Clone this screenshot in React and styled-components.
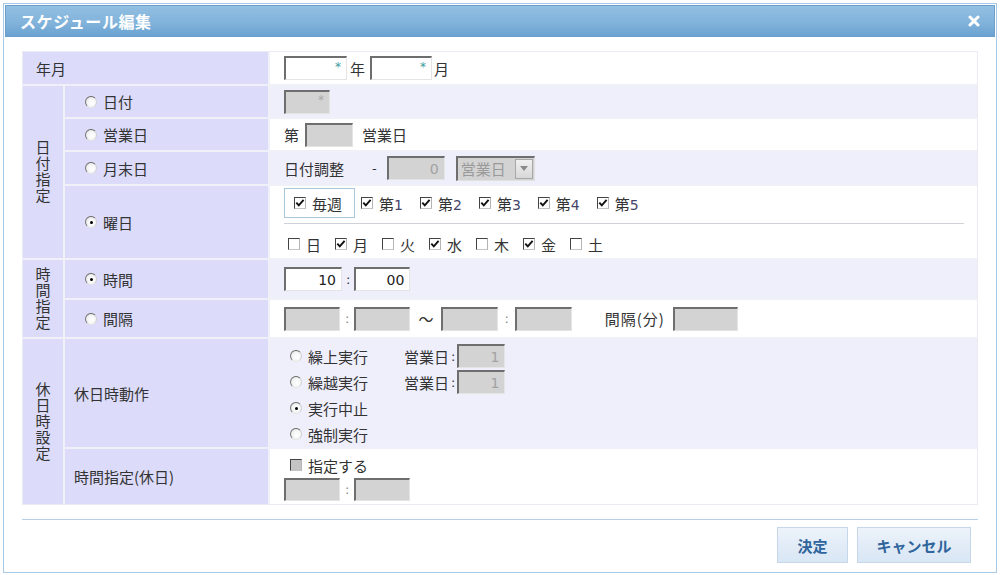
import styled, { createGlobalStyle } from "styled-components";

const GlobalStyle = createGlobalStyle`
  html, body { margin: 0; padding: 0; background: #fff; }
  body {
    font-family: "Noto Sans CJK JP", "Noto Sans", sans-serif;
    font-size: 15px;
    color: #333;
  }
`;

const Page = styled.div`
  padding: 3px;
`;

const Dialog = styled.div`
  width: 994px;
  height: 570px;
  box-sizing: border-box;
  border: 1px solid #a9c9e6;
  padding: 1px;
  display: flex;
  flex-direction: column;
  background: #fff;
`;

const TitleBar = styled.div`
  height: 32px;
  box-sizing: border-box;
  border: 1px solid #6a9fcf;
  background: linear-gradient(180deg, #92bfe2 0%, #82b3db 55%, #6aa2d1 100%);
  display: flex;
  align-items: center;
  justify-content: space-between;
  padding: 0 14px 0 14px;
`;

const Title = styled.span`
  color: #fff;
  font-weight: bold;
  font-size: 16px;
  letter-spacing: 0.6px;
`;

const CloseIcon = () => (
  <svg width="12" height="12" viewBox="0 0 12 12">
    <path d="M2 2 L10 10 M10 2 L2 10" stroke="#fff" strokeWidth="3" strokeLinecap="round" />
  </svg>
);

const Body = styled.div`
  margin: 14px 17px 0 17px;
`;

const Table = styled.div`
  display: grid;
  grid-template-columns: 40px 203px 1fr;
  grid-template-rows: 32px 31px 31px 32px 72px 38px 37px 108px 55px;
  gap: 2px;
  background: #f0f0f8;
  border: 1px solid #ebebf3;
`;

const HeadCell = styled.div`
  grid-column: span ${(p) => p.$cols || 1};
  grid-row: span ${(p) => p.$rows || 1};
  background: #dcdcfa;
  display: flex;
  align-items: center;
  padding-left: ${(p) => p.$pad ?? 0}px;
`;

const GroupCell = styled(HeadCell)`
  justify-content: center;
`;

const VerticalText = styled.span`
  writing-mode: vertical-rl;
  text-orientation: upright;
  letter-spacing: 1px;
  line-height: 1;
`;

const ValueCell = styled.div`
  background: ${(p) => (p.$alt ? "#efeffc" : "#fff")};
  display: flex;
  flex-direction: ${(p) => (p.$column ? "column" : "row")};
  align-items: ${(p) => (p.$column ? "flex-start" : "center")};
  padding: ${(p) => p.$padTop || 0}px 0 0 14px;
  box-sizing: border-box;
`;

const RadioMark = styled.span`
  flex: none;
  width: 12px;
  height: 12px;
  box-sizing: border-box;
  border-radius: 50%;
  border: 1px solid;
  border-color: #666 #d0d0d0 #e4e4e4 #777;
  background: radial-gradient(circle at 60% 60%, #ffffff 0%, #f4f4f4 55%, #d6d6d6 100%);
  position: relative;
  &::after {
    content: "";
    display: ${(p) => (p.$checked ? "block" : "none")};
    position: absolute;
    left: 3.5px;
    top: 3.5px;
    width: 3px;
    height: 3px;
    border-radius: 50%;
    background: #000;
  }
`;

const OptionRow = styled.label`
  display: flex;
  align-items: center;
  gap: 6px;
`;

const OptionText = styled.span`
  width: ${(p) => (p.$w ? `${p.$w}px` : "auto")};
`;

const Radio = ({ checked, label, width }) => (
  <OptionRow>
    <RadioMark $checked={checked} />
    <OptionText $w={width}>{label}</OptionText>
  </OptionRow>
);

const CheckBox = styled.span`
  flex: none;
  width: 12px;
  height: 12px;
  box-sizing: border-box;
  border: 1px solid;
  border-color: #444 #b4b4b4 #c4c4c4 #444;
  background: ${(p) => (p.$disabled ? "#c4c4c4" : "#fff")};
  display: flex;
  align-items: center;
  justify-content: center;
`;

const Check = ({ checked, disabled }) => (
  <CheckBox $disabled={disabled}>
    {checked && (
      <svg width="10" height="10" viewBox="0 0 10 10">
        <path d="M1.3 4.6 L3.8 7.4 L8.6 1.8" fill="none" stroke="#111" strokeWidth="1.9" />
      </svg>
    )}
  </CheckBox>
);

const CheckItem = styled.span`
  display: inline-flex;
  align-items: center;
  gap: 6px;
`;

const Digit = styled.span`
  font-family: "DejaVu Sans", sans-serif;
  font-size: 14px;
  color: #45456a;
`;

const TextBox = styled.span`
  display: inline-flex;
  align-items: center;
  justify-content: flex-end;
  box-sizing: border-box;
  flex: none;
  width: ${(p) => p.$w}px;
  height: ${(p) => p.$h || 24}px;
  border-top: 2px solid #6e6e6e;
  border-left: 2px solid #6e6e6e;
  border-right: 1px solid #e4e4e4;
  border-bottom: 1px solid #e4e4e4;
  background: ${(p) => (p.$disabled ? "#d3d3d3" : "#fff")};
  color: ${(p) => (p.$disabled ? "#a2a2a2" : "#222")};
  padding-right: 5px;
  font-family: "DejaVu Sans", sans-serif;
  font-size: 14px;
  margin-left: ${(p) => p.$ml || 0}px;
`;

const Star = styled.span`
  color: ${(p) => (p.$disabled ? "#aaa" : "#3c9ca0")};
  font-size: 12px;
  position: relative;
  top: -2px;
`;

const Sep = styled.span`
  margin: 0 ${(p) => p.$m ?? 4}px;
  margin-left: ${(p) => p.$ml ?? p.$m ?? 4}px;
  font-family: ${(p) => (p.$latin ? '"DejaVu Sans", sans-serif' : "inherit")};
  font-size: ${(p) => (p.$latin ? "13px" : "15px")};
  color: ${(p) => (p.$muted ? "#888" : "#333")};
  letter-spacing: ${(p) => p.$ls || 0}px;
`;

const Select = styled.span`
  display: inline-flex;
  align-items: stretch;
  box-sizing: border-box;
  width: 79px;
  height: 25px;
  margin-left: 11px;
  border-top: 2px solid #6e6e6e;
  border-left: 2px solid #6e6e6e;
  border-right: 1px solid #e0e0e0;
  border-bottom: 1px solid #e0e0e0;
  background: #d3d3d3;
  color: #9a9a9a;
`;

const SelectText = styled.span`
  flex: 1;
  display: flex;
  align-items: center;
  padding-left: 3px;
`;

const SelectArrow = styled.span`
  width: 18px;
  margin: 1px;
  box-sizing: border-box;
  border: 1px solid #a8a8a8;
  background: linear-gradient(#f0f0f0, #d8d8d8);
  display: flex;
  align-items: center;
  justify-content: center;
`;

const WeekLine = styled.div`
  display: flex;
  align-items: center;
  gap: ${(p) => p.$gap}px;
  padding-left: ${(p) => p.$pad || 0}px;
  height: ${(p) => p.$h}px;
`;

const EveryWeek = styled.span`
  display: inline-flex;
  align-items: center;
  gap: 6px;
  box-sizing: border-box;
  height: 30px;
  width: 71px;
  padding: 0 0 0 9px;
  border: 1px solid #a9c8dc;
  margin-right: -11px;
`;

const Divider = styled.div`
  align-self: stretch;
  height: 1px;
  background: #d0d0d8;
  margin: 5px 13px 9px 0;
`;

const HolidayList = styled.div`
  display: flex;
  flex-direction: column;
  padding-left: 6px;
`;

const HolidayRow = styled.div`
  display: flex;
  align-items: center;
  height: 26px;
`;

const Footer = styled.div`
  margin: 14px 17px 0 17px;
  border-top: 1px solid #b7cfe6;
  display: flex;
  justify-content: flex-end;
  gap: 9px;
  padding: 7px 7px 0 0;
`;

const Button = styled.button`
  width: ${(p) => p.$w}px;
  height: 36px;
  border: 1px solid #c6d7ea;
  background: linear-gradient(180deg, #edf3fa 0%, #e2ecf7 50%, #d9e6f4 100%);
  color: #2f659c;
  font-family: "Noto Sans CJK JP", sans-serif;
  font-weight: bold;
  font-size: 15px;
  padding: 0;
  cursor: pointer;
`;

const weekdays = [
  ["日", false],
  ["月", true],
  ["火", false],
  ["水", true],
  ["木", false],
  ["金", true],
  ["土", false],
];

export default function App() {
  return (
    <>
      <GlobalStyle />
      <Page>
        <Dialog>
          <TitleBar>
            <Title>スケジュール編集</Title>
            <CloseIcon />
          </TitleBar>
          <Body>
            <Table>
              <HeadCell $cols={2} $pad={13}>年月</HeadCell>
              <ValueCell>
                <TextBox $w={63}><Star>*</Star></TextBox>
                <Sep $m={3}>年</Sep>
                <TextBox $w={62} $ml={2}><Star>*</Star></TextBox>
                <Sep $m={2}>月</Sep>
              </ValueCell>

              <GroupCell $rows={4}><VerticalText>日付指定</VerticalText></GroupCell>
              <HeadCell $pad={20}><Radio label="日付" /></HeadCell>
              <ValueCell $alt>
                <TextBox $w={46} $disabled><Star $disabled>*</Star></TextBox>
              </ValueCell>

              <HeadCell $pad={20}><Radio label="営業日" /></HeadCell>
              <ValueCell>
                <span>第</span>
                <TextBox $w={48} $disabled $ml={6} />
                <Sep $ml={9}>営業日</Sep>
              </ValueCell>

              <HeadCell $pad={20}><Radio label="月末日" /></HeadCell>
              <ValueCell $alt>
                <span>日付調整</span>
                <Sep $ml={28} $m={10} $latin>-</Sep>
                <TextBox $w={58} $disabled>0</TextBox>
                <Select>
                  <SelectText>営業日</SelectText>
                  <SelectArrow>
                    <svg width="8" height="5" viewBox="0 0 8 5">
                      <path d="M0 0 L8 0 L4 5 Z" fill="#8a8a8a" />
                    </svg>
                  </SelectArrow>
                </Select>
              </ValueCell>

              <HeadCell $pad={20}><Radio label="曜日" checked /></HeadCell>
              <ValueCell $column $padTop={2}>
                <WeekLine $gap={17} $h={30}>
                  <EveryWeek><Check checked /><span>毎週</span></EveryWeek>
                  {[1, 2, 3, 4, 5].map((n) => (
                    <CheckItem key={n}>
                      <Check checked />
                      <span>第<Digit>{n}</Digit></span>
                    </CheckItem>
                  ))}
                </WeekLine>
                <Divider />
                <WeekLine $gap={14} $h={22} $pad={4}>
                  {weekdays.map(([d, c]) => (
                    <CheckItem key={d}>
                      <Check checked={c} />
                      <span>{d}</span>
                    </CheckItem>
                  ))}
                </WeekLine>
              </ValueCell>

              <GroupCell $rows={2}><VerticalText>時間指定</VerticalText></GroupCell>
              <HeadCell $pad={20}><Radio label="時間" checked /></HeadCell>
              <ValueCell $alt>
                <TextBox $w={58}>10</TextBox>
                <Sep $latin>:</Sep>
                <TextBox $w={56}>00</TextBox>
              </ValueCell>

              <HeadCell $pad={20}><Radio label="間隔" /></HeadCell>
              <ValueCell>
                <TextBox $w={56} $disabled />
                <Sep $m={5} $latin $muted>:</Sep>
                <TextBox $w={56} $disabled />
                <Sep $ml={8} $m={5} $ls={3}>〜</Sep>
                <TextBox $w={57} $disabled />
                <Sep $m={6} $latin $muted>:</Sep>
                <TextBox $w={57} $disabled />
                <Sep $ml={33} $m={8} $ls={1}>間隔(分)</Sep>
                <TextBox $w={65} $disabled />
              </ValueCell>

              <GroupCell $rows={2}><VerticalText>休日時設定</VerticalText></GroupCell>
              <HeadCell $pad={9}>休日時動作</HeadCell>
              <ValueCell $alt $column $padTop={4}>
                <HolidayList>
                  <HolidayRow>
                    <Radio label="繰上実行" width={96} />
                    <span>営業日</span>
                    <Sep $m={2} $latin>:</Sep>
                    <TextBox $w={48} $disabled>1</TextBox>
                  </HolidayRow>
                  <HolidayRow>
                    <Radio label="繰越実行" width={96} />
                    <span>営業日</span>
                    <Sep $m={2} $latin>:</Sep>
                    <TextBox $w={48} $disabled>1</TextBox>
                  </HolidayRow>
                  <HolidayRow><Radio label="実行中止" checked /></HolidayRow>
                  <HolidayRow><Radio label="強制実行" /></HolidayRow>
                </HolidayList>
              </ValueCell>

              <HeadCell $pad={9}>時間指定(休日)</HeadCell>
              <ValueCell $column $padTop={5}>
                <WeekLine $gap={6} $h={22} $pad={6}>
                  <Check disabled />
                  <span>指定する</span>
                </WeekLine>
                <WeekLine $gap={0} $h={26}>
                  <TextBox $w={56} $h={23} $disabled />
                  <Sep $m={5} $latin $muted>:</Sep>
                  <TextBox $w={56} $h={23} $disabled />
                </WeekLine>
              </ValueCell>
            </Table>
          </Body>
          <Footer>
            <Button $w={71}>決定</Button>
            <Button $w={114}>キャンセル</Button>
          </Footer>
        </Dialog>
      </Page>
    </>
  );
}
